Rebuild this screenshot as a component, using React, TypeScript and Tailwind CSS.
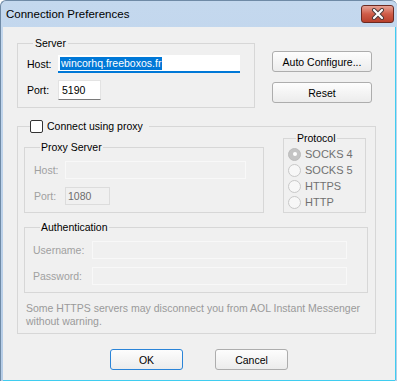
import React from "react";

function Btn({ children, def, className }: { children: React.ReactNode; def?: boolean; className?: string }) {
  return (
    <div
      className={
        "flex items-center justify-center rounded-[3px] border bg-gradient-to-b from-[#fdfdfd] to-[#ececec] text-black " +
        (def ? "border-[#2a84d8] " : "border-[#adadad] ") +
        (className ?? "")
      }
    >
      {children}
    </div>
  );
}

function Radio({ checked, label }: { checked?: boolean; label: string }) {
  return (
    <div className="flex items-center h-[16px] gap-[4px]">
      <span
        className={
          "w-[13px] h-[13px] rounded-full border flex items-center justify-center " +
          (checked ? "border-[#bcbcbc] bg-[#c4c4c4]" : "border-[#c8c8c8] bg-[#f7f7f7]")
        }
      >
        {checked && <span className="w-[4px] h-[4px] rounded-full bg-white" />}
      </span>
      <span className="text-[#707070] leading-[16px] text-[11px]">{label}</span>
    </div>
  );
}

export default function App() {
  return (
    <div className="w-[397px] h-[381px] flex flex-col rounded-t-[6px] border-t border-l border-[#6f8aa6] bg-gradient-to-b from-[#c4d8ee] to-[#b6cde7] font-['Liberation_Sans',Arial,sans-serif] text-[10.5px] leading-[14px] text-black overflow-hidden">
      {/* Title bar */}
      <div className="h-[26px] flex items-center justify-between pl-[5px] pr-[3px]">
        <span className="text-[11.5px] text-black">Connection Preferences</span>
        <div className="w-[33px] h-[18px] rounded-[3px] border border-[#6b2a22] bg-gradient-to-b from-[#e6a295] via-[#cf5c48] to-[#b8402c] flex items-center justify-center">
          <svg width="14" height="12" viewBox="0 0 14 12">
            <path d="M3 2 L11 10 M11 2 L3 10" stroke="#4a3a3a" strokeWidth="4" strokeLinecap="round" />
            <path d="M3 2 L11 10 M11 2 L3 10" stroke="#ffffff" strokeWidth="2.2" strokeLinecap="round" />
          </svg>
        </div>
      </div>

      {/* Client area */}
      <div className="flex-1 flex flex-col ml-[2px] mr-[2px] mb-[1px] bg-[#f0f0f0] pl-[14px] pr-[19px] pt-[9px] shadow-[1px_0_0_#3fcdf0,0_1px_0_#3fcdf0]">
        {/* Top row */}
        <div className="flex items-start">
          <fieldset className="w-[238px] border border-[#d7d7d7] pl-[9px] pt-[5px] pb-[7px]">
            <legend className="ml-[6px] px-[2px] leading-[14px]">Server</legend>
            <div className="flex items-center">
              <span className="w-[31px]">Host:</span>
              <div className="w-[182px] h-[18px] bg-white border-b-2 border-[#0078d7] flex items-center pl-[2px]">
                <span className="bg-[#0078d7] text-white leading-[13px] px-[1px]">wincorhq.freeboxos.fr</span>
              </div>
            </div>
            <div className="flex items-center mt-[7px]">
              <span className="w-[31px]">Port:</span>
              <div className="w-[43px] h-[20px] bg-white border border-[#e3e3e3] border-b-[#7a7a7a] flex items-center pl-[3px]">
                5190
              </div>
            </div>
          </fieldset>
          <div className="ml-[17px] mt-[15px] flex flex-col gap-[10px]">
            <Btn className="w-[100px] h-[21px]">Auto Configure...</Btn>
            <Btn className="w-[100px] h-[21px]">Reset</Btn>
          </div>
        </div>

        {/* Proxy section */}
        <fieldset className="mt-[11px] border border-[#d7d7d7] pl-[6px] pr-[7px] pb-[5px]">
          <legend className="ml-[6px] pr-[6px] flex items-center gap-[4px] leading-[14px]">
            <span className="w-[13px] h-[13px] rounded-[2px] border border-[#333333] bg-white" />
            <span>Connect using proxy</span>
          </legend>
          <div className="flex items-end -mt-[2px]">
            <fieldset className="w-[240px] border border-[#d7d7d7] pl-[9px] pt-[7px] pb-[7px]">
              <legend className="ml-[6px] px-[1px] leading-[14px]">Proxy Server</legend>
              <div className="flex items-center">
                <span className="w-[31px] text-[#a0a0a0]">Host:</span>
                <div className="w-[181px] h-[18px] border border-[#f8f8f8]" />
              </div>
              <div className="flex items-center mt-[8px]">
                <span className="w-[31px] text-[#a0a0a0]">Port:</span>
                <div className="w-[45px] h-[18px] border border-[#dcdcdc] flex items-center pl-[2px] text-[#6d6d6d]">
                  1080
                </div>
              </div>
            </fieldset>
            <fieldset className="ml-[19px] w-[83px] border border-[#d7d7d7] pl-[4px] pt-[1px] pb-[2px]">
              <legend className="ml-[8px] px-[1px] leading-[14px]">Protocol</legend>
              <Radio checked label="SOCKS 4" />
              <Radio label="SOCKS 5" />
              <Radio label="HTTPS" />
              <Radio label="HTTP" />
            </fieldset>
          </div>

          <fieldset className="mt-[7px] border border-[#d7d7d7] pl-[8px] pt-[7px] pb-[7px]">
            <legend className="ml-[7px] px-[1px] leading-[14px]">Authentication</legend>
            <div className="flex items-center">
              <span className="w-[59px] text-[#a0a0a0]">Username:</span>
              <div className="w-[255px] h-[18px] border border-[#f8f8f8]" />
            </div>
            <div className="flex items-center mt-[8px]">
              <span className="w-[59px] text-[#a0a0a0]">Password:</span>
              <div className="w-[255px] h-[18px] border border-[#f8f8f8]" />
            </div>
          </fieldset>

          <p className="mt-[9px] pl-[2px] text-[#9a9a9a] leading-[13px] whitespace-nowrap">
            Some HTTPS servers may disconnect you from AOL Instant Messenger
            <br />
            without warning.
          </p>
        </fieldset>

        {/* Bottom buttons */}
        <div className="mt-[15px] flex justify-center gap-[32px] -mr-[5px]">
          <Btn def className="w-[73px] h-[21px]">OK</Btn>
          <Btn className="w-[73px] h-[21px]">Cancel</Btn>
        </div>
      </div>
    </div>
  );
}
